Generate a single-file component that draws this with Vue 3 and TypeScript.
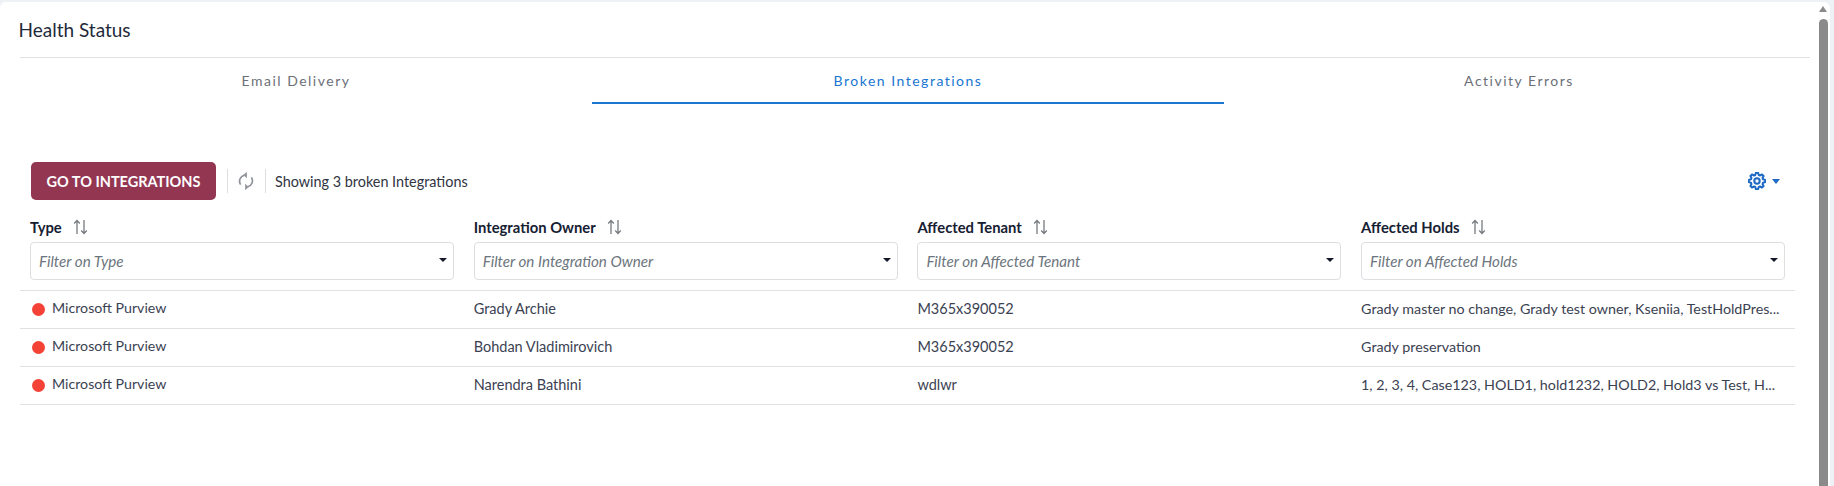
<script setup lang="ts">
interface Row { type: string; owner: string; tenant: string; holds: string }
const columns = [
  { label: 'Type', filter: 'Filter on Type' },
  { label: 'Integration Owner', filter: 'Filter on Integration Owner' },
  { label: 'Affected Tenant', filter: 'Filter on Affected Tenant' },
  { label: 'Affected Holds', filter: 'Filter on Affected Holds' },
]
const rows: Row[] = [
  { type: 'Microsoft Purview', owner: 'Grady Archie', tenant: 'M365x390052', holds: 'Grady master no change, Grady test owner, Kseniia, TestHoldPres...' },
  { type: 'Microsoft Purview', owner: 'Bohdan Vladimirovich', tenant: 'M365x390052', holds: 'Grady preservation' },
  { type: 'Microsoft Purview', owner: 'Narendra Bathini', tenant: 'wdlwr', holds: '1, 2, 3, 4, Case123, HOLD1, hold1232, HOLD2, Hold3 vs Test, H...' },
]
const tabs = ['Email Delivery', 'Broken Integrations', 'Activity Errors']

function cogPath(teeth: number, outer: number, inner: number): string {
  const pts: string[] = []
  const step = (Math.PI * 2) / teeth
  for (let i = 0; i < teeth; i++) {
    const a = i * step - Math.PI / 2
    const add = (r: number, d: number) => {
      pts.push(`${(12 + r * Math.cos(a + d * step)).toFixed(2)} ${(12 + r * Math.sin(a + d * step)).toFixed(2)}`)
    }
    add(inner, -0.36)
    add(outer, -0.17)
    add(outer, 0.17)
    add(inner, 0.36)
  }
  return 'M' + pts.join('L') + 'Z'
}
const cog = cogPath(8, 11, 8.4)
</script>

<template>
  <div class="page">
    <div class="card">
      <main class="content">
        <h1 class="title">Health Status</h1>
        <nav class="tabs">
          <div v-for="(t, i) in tabs" :key="t" class="tab" :class="{ active: i === 1 }">{{ t }}</div>
        </nav>
        <div class="toolbar">
          <button class="go">GO TO INTEGRATIONS</button>
          <span class="sep"></span>
          <svg class="refresh" width="16" height="20" viewBox="0 0 16 20" fill="none" stroke="#8f9399" stroke-width="1.7">
            <path d="M2.6 13.6A6.2 6.2 0 0 1 6.2 4.2" />
            <path d="M13.4 6.4A6.2 6.2 0 0 1 9.8 15.8" />
            <path d="M8.8 0.8v6.4L5.4 4z" fill="#8f9399" stroke="none" />
            <path d="M7.2 12.8v6.4l3.4-3.2z" fill="#8f9399" stroke="none" />
          </svg>
          <span class="sep"></span>
          <span class="showing">Showing 3 broken Integrations</span>
          <div class="settings">
            <svg width="18" height="18" viewBox="0 0 24 24" fill="none" stroke="#1d69c4" stroke-width="2.7" stroke-linejoin="round">
              <circle cx="12" cy="12" r="3.6" />
              <path :d="cog" />
            </svg>
            <span class="settings-caret"></span>
          </div>
        </div>
        <div class="table">
          <div class="head">
            <div v-for="c in columns" :key="c.label" class="col-head">
              <div class="col-label">
                <span>{{ c.label }}</span>
                <svg class="sort" width="15" height="16" viewBox="0 0 15 16" fill="none" stroke="#777b80" stroke-width="1.3">
                  <path d="M4 15V1.5M1.2 4.5 4 1.5l2.8 3" />
                  <path d="M11 1v13.5M8.2 11.5l2.8 3 2.8-3" />
                </svg>
              </div>
              <div class="filter">
                <span class="placeholder">{{ c.filter }}</span>
                <span class="caret"></span>
              </div>
            </div>
          </div>
          <div v-for="(r, i) in rows" :key="i" class="row">
            <div class="cell type"><span class="dot"></span><span class="type-text">{{ r.type }}</span></div>
            <div class="cell">{{ r.owner }}</div>
            <div class="cell">{{ r.tenant }}</div>
            <div class="cell holds">{{ r.holds }}</div>
          </div>
        </div>
      </main>
      <aside class="scrollbar">
        <span class="arrow"></span>
        <span class="thumb"></span>
      </aside>
    </div>
  </div>
</template>

<style>
html, body { margin: 0; background: #eef1f5; overflow: hidden; }
</style>

<style scoped>
.page {
  height: 486px;
  padding: 2px 4px 0 0;
  box-sizing: border-box;
  background: #eef1f5;
  font-family: Lato, "Open Sans", sans-serif;
  color: #3b4252;
  overflow: hidden;
}
.card {
  display: flex;
  height: 484px;
  background: #fff;
  border-radius: 6px 6px 0 0;
}
.content { width: 1816px; box-sizing: border-box; padding-left: 20px; }
.title {
  margin: 0 0 0 -1.5px;
  height: 55px;
  font-size: 19px;
  font-weight: 400;
  line-height: 55px;
  color: #1f2a3a;
}
.tabs {
  display: grid;
  grid-template-columns: 552px 632px 550px;
  column-gap: 20px;
  width: 1790px;
  height: 47px;
  border-top: 1px solid #dfe1e5;
  box-sizing: border-box;
}
.tab {
  height: 46px;
  box-sizing: border-box;
  line-height: 46px;
  text-align: center;
  font-size: 14px;
  letter-spacing: 1.5px;
  color: #6c7078;
}
.tab.active { color: #1976d2; border-bottom: 2px solid #1976d2; }
.toolbar {
  display: flex;
  align-items: center;
  height: 38px;
  margin-top: 58px;
  padding-left: 11px;
  width: 1749px;
}
.go {
  width: 185px;
  height: 38px;
  padding: 0;
  border: 0;
  border-radius: 5px;
  background: #933652;
  color: #fff;
  font: 700 14.5px Lato, sans-serif;
}
.sep { width: 1px; height: 24px; background: #dcdee2; margin-left: 11px; }
.refresh { margin-left: 10px; }
.showing { margin-left: 9px; font-size: 14.4px; color: #2f3542; }
.settings { margin-left: auto; display: flex; align-items: center; gap: 6px; }
.settings-caret {
  width: 0; height: 0;
  border-left: 4.5px solid transparent;
  border-right: 4.5px solid transparent;
  border-top: 5px solid #1d69c4;
}
.table { width: 1775px; margin-top: 16px; }
.head {
  display: grid;
  grid-template-columns: repeat(4, 424px);
  column-gap: 19.7px;
  padding: 0 0 10px 10px;
  border-bottom: 1px solid #dfe1e5;
}
.col-label {
  display: flex;
  align-items: center;
  gap: 11px;
  height: 26px;
  padding-bottom: 4px;
  box-sizing: border-box;
  font-size: 14.8px;
  font-weight: 700;
  color: #162032;
}
.filter {
  display: flex;
  align-items: center;
  justify-content: space-between;
  height: 38px;
  box-sizing: border-box;
  padding: 0 6px 0 8px;
  border: 1px solid #dcdee2;
  border-radius: 4px;
}
.placeholder { font-size: 15.2px; font-style: italic; color: #6c757d; }
.caret {
  width: 0; height: 0;
  border-left: 4px solid transparent;
  border-right: 4px solid transparent;
  border-top: 4px solid #14182a;
  margin-top: -3px;
}
.row {
  display: grid;
  grid-template-columns: repeat(4, 424px);
  column-gap: 19.7px;
  height: 38px;
  box-sizing: border-box;
  padding: 0 0 2px 10px;
  border-bottom: 1px solid #dfe1e5;
  align-items: center;
}
.cell {
  font-size: 14.5px;
  color: #3b4252;
  white-space: nowrap;
}
.holds { font-size: 14.3px; }
.type { display: flex; align-items: center; gap: 7px; padding-left: 2px; }
.type-text { font-size: 14.2px; margin-top: -3px; }
.dot { width: 13px; height: 13px; border-radius: 50%; background: #f44336; flex: none; margin-top: 2px; }
.scrollbar {
  display: flex;
  flex-direction: column;
  align-items: center;
  width: 14px;
}
.arrow {
  width: 0; height: 0;
  margin-top: 4px;
  border-left: 4.5px solid transparent;
  border-right: 4.5px solid transparent;
  border-bottom: 6px solid #8a8a8a;
}
.thumb {
  width: 9px;
  flex: 1;
  margin-top: 7px;
  background: #8a8a8a;
  border-radius: 4.5px 4.5px 0 0;
}
</style>
